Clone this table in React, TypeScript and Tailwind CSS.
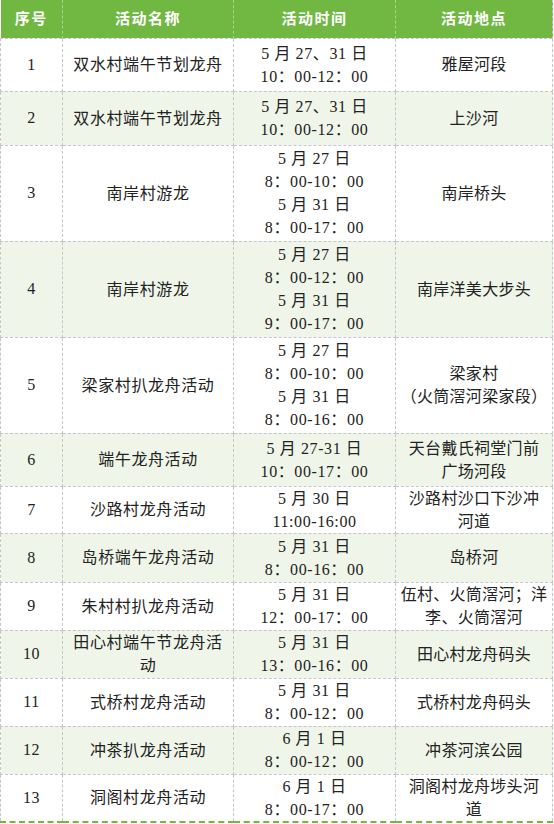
type Row = {
  no: string;
  name: string[];
  time: string[];
  place: string[];
  h: string;
};

const rows: Row[] = [
  { no: "1", name: ["双水村端午节划龙舟"], time: ["5 月 27、31 日", "10：00-12：00"], place: ["雅屋河段"], h: "h-[53px]" },
  { no: "2", name: ["双水村端午节划龙舟"], time: ["5 月 27、31 日", "10：00-12：00"], place: ["上沙河"], h: "h-[54px]" },
  { no: "3", name: ["南岸村游龙"], time: ["5 月 27 日", "8：00-10：00", "5 月 31 日", "8：00-17：00"], place: ["南岸桥头"], h: "h-[96px]" },
  { no: "4", name: ["南岸村游龙"], time: ["5 月 27 日", "8：00-12：00", "5 月 31 日", "9：00-17：00"], place: ["南岸洋美大步头"], h: "h-[96px]" },
  { no: "5", name: ["梁家村扒龙舟活动"], time: ["5 月 27 日", "8：00-10：00", "5 月 31 日", "8：00-16：00"], place: ["梁家村", "（火筒滘河梁家段）"], h: "h-[96px]" },
  { no: "6", name: ["端午龙舟活动"], time: ["5 月 27-31 日", "10：00-17：00"], place: ["天台戴氏祠堂门前", "广场河段"], h: "h-[53px]" },
  { no: "7", name: ["沙路村龙舟活动"], time: ["5 月 30 日", "11:00-16:00"], place: ["沙路村沙口下沙冲", "河道"], h: "h-[47px]" },
  { no: "8", name: ["岛桥端午龙舟活动"], time: ["5 月 31 日", "8：00-16：00"], place: ["岛桥河"], h: "h-[49px]" },
  { no: "9", name: ["朱村村扒龙舟活动"], time: ["5 月 31 日", "12：00-17：00"], place: ["伍村、火筒滘河；洋", "李、火筒滘河"], h: "h-[48px]" },
  { no: "10", name: ["田心村端午节龙舟活", "动"], time: ["5 月 31 日", "13：00-16：00"], place: ["田心村龙舟码头"], h: "h-[48px]" },
  { no: "11", name: ["式桥村龙舟活动"], time: ["5 月 31 日", "8：00-12：00"], place: ["式桥村龙舟码头"], h: "h-[48px]" },
  { no: "12", name: ["冲茶扒龙舟活动"], time: ["6 月 1 日", "8：00-12：00"], place: ["冲茶河滨公园"], h: "h-[48px]" },
  { no: "13", name: ["洞阁村龙舟活动"], time: ["6 月 1 日", "8：00-17：00"], place: ["洞阁村龙舟埗头河", "道"], h: "h-[47px]" },
];

function Lines({ items }: { items: string[] }) {
  return (
    <>
      {items.map((t, i) => (
        <div key={i} className="leading-[23px] whitespace-nowrap">
          {t}
        </div>
      ))}
    </>
  );
}

export default function App() {
  const cell = "border border-dashed border-[#c6c6c6] text-center align-middle p-0";
  return (
    <div
      className="w-[554px] h-[824px] bg-white text-[16px] tracking-[0.6px] text-[#222]"
      style={{ fontFamily: '"Liberation Serif", "Noto Sans CJK SC", serif' }}
    >
      <table className="w-[552px] table-fixed border-collapse">
        <colgroup>
          <col className="w-[62px]" />
          <col className="w-[171px]" />
          <col className="w-[162px]" />
          <col className="w-[157px]" />
        </colgroup>
        <thead>
          <tr className="h-[38px] bg-[#71b843] text-white font-bold text-[15px] tracking-[1.5px]">
            <th className="border-r border-dashed border-[#a9d68a] font-bold">序号</th>
            <th className="border-r border-dashed border-[#a9d68a] font-bold">活动名称</th>
            <th className="border-r border-dashed border-[#a9d68a] font-bold">活动时间</th>
            <th className="border-r border-dashed border-[#c6c6c6] font-bold">活动地点</th>
          </tr>
        </thead>
        <tbody>
          {rows.map((r, i) => {
            const last = i === rows.length - 1;
            const bottom = last ? " border-b-2 border-b-[#71b843]" : "";
            return (
              <tr key={r.no} className={`${r.h} ${i % 2 === 1 ? "bg-[#eff6e9]" : "bg-white"}`}>
                <td className={cell + bottom}>{r.no}</td>
                <td className={cell + bottom}>
                  <Lines items={r.name} />
                </td>
                <td className={cell + bottom}>
                  <Lines items={r.time} />
                </td>
                <td className={cell + bottom + " tracking-[0.3px]"}>
                  <Lines items={r.place} />
                </td>
              </tr>
            );
          })}
        </tbody>
      </table>
    </div>
  );
}
